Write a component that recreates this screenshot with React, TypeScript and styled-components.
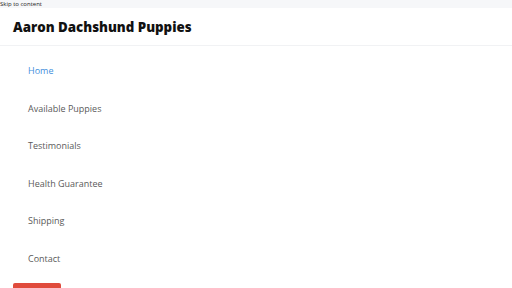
import React from "react";
import styled, { createGlobalStyle } from "styled-components";

const Global = createGlobalStyle`
  html, body { margin: 0; padding: 0; background: #ffffff; }
  body { font-family: "Open Sans", "Liberation Sans", sans-serif; }
`;

const Page = styled.div`
  width: 512px;
  height: 288px;
  overflow: hidden;
  display: flex;
  flex-direction: column;
  background: #ffffff;
  & > * { flex-shrink: 0; }
`;

const SkipBar = styled.div`
  height: 8px;
  background: #f6f7f9;
  display: flex;
  align-items: center;
`;

const SkipLink = styled.a`
  font-size: 6px;
  line-height: 8px;
  color: #222;
  text-decoration: none;
  font-family: "Open Sans", sans-serif;
`;

const Header = styled.header`
  height: 37px;
  display: flex;
  align-items: center;
  padding: 0 13px;
  border-bottom: 1px solid #f1f2f4;
`;

const Title = styled.h1`
  margin: 0;
  font-family: "Open Sans", sans-serif;
  font-weight: 800;
  font-size: 13.3px;
  color: #111;
`;

const Nav = styled.nav`
  display: flex;
  flex-direction: column;
  padding: 6px 0 0 28px;
`;

const NavItem = styled.a<{ $active?: boolean }>`
  display: flex;
  align-items: center;
  height: 37.5px;
  font-size: 9px;
  font-family: "Open Sans", sans-serif;
  color: ${(p) => (p.$active ? "#3f8fdc" : "#5a5a5a")};
  text-decoration: none;
`;

const RedButton = styled.div`
  margin: 6px 0 0 13px;
  width: 48px;
  height: 12px;
  background: #e04b3c;
  border-radius: 2px;
`;

const items = [
  "Home",
  "Available Puppies",
  "Testimonials",
  "Health Guarantee",
  "Shipping",
  "Contact",
];

export default function App() {
  return (
    <Page>
      <Global />
      <SkipBar>
        <SkipLink href="#content">Skip to content</SkipLink>
      </SkipBar>
      <Header>
        <Title>Aaron Dachshund Puppies</Title>
      </Header>
      <Nav>
        {items.map((t, i) => (
          <NavItem key={t} href="#" $active={i === 0}>
            {t}
          </NavItem>
        ))}
      </Nav>
      <RedButton />
    </Page>
  );
}
